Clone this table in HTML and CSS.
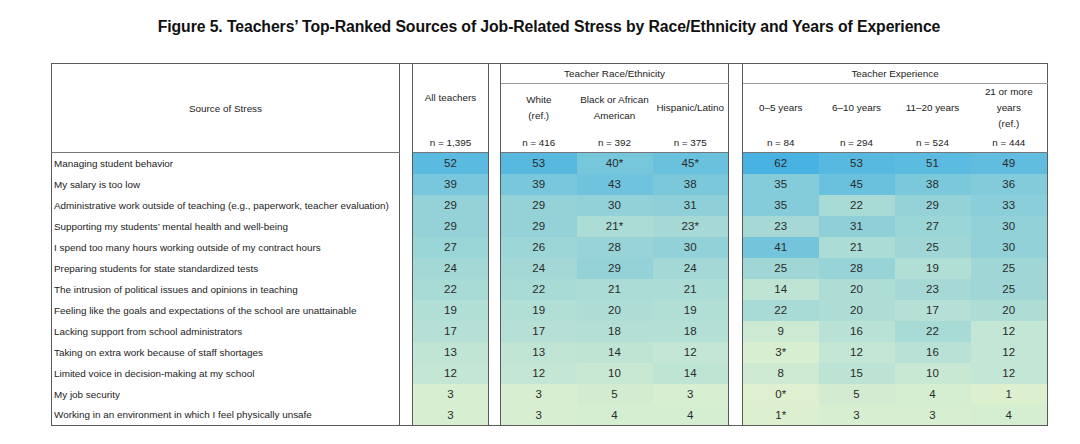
FILE: index.html
```html
<!DOCTYPE html>
<html lang="en">
<head>
<meta charset="utf-8">
<title>Figure 5</title>
<link rel="stylesheet" href="styles.css">
</head>
<body>
<div class="figure">
  <h1 class="title">Figure 5. Teachers’ Top-Ranked Sources of Job-Related Stress by Race/Ethnicity and Years of Experience</h1>
  <table class="grid">
    <colgroup>
      <col class="c-src"><col class="c-gap1"><col class="c-num"><col class="c-gap2">
      <col class="c-num"><col class="c-num"><col class="c-num"><col class="c-gap3">
      <col class="c-num"><col class="c-num"><col class="c-num"><col class="c-num4">
    </colgroup>
    <thead>
      <tr class="h1">
        <th rowspan="3" class="src-head">Source of Stress</th>
        <th rowspan="3" class="gap"></th>
        <th rowspan="2" class="hcell">All teachers</th>
        <th rowspan="3" class="gap"></th>
        <th colspan="3" class="group">Teacher Race/Ethnicity</th>
        <th rowspan="3" class="gap"></th>
        <th colspan="4" class="group">Teacher Experience</th>
      </tr>
      <tr class="h2">
        <th class="hcell">White<br>(ref.)</th>
        <th class="hcell">Black or African<br>American</th>
        <th class="hcell">Hispanic/Latino</th>
        <th class="hcell">0–5 years</th>
        <th class="hcell">6–10 years</th>
        <th class="hcell">11–20 years</th>
        <th class="hcell">21 or more<br>years<br>(ref.)</th>
      </tr>
      <tr class="h3">
        <th class="ncell">n = 1,395</th>
        <th class="ncell">n = 416</th>
        <th class="ncell">n = 392</th>
        <th class="ncell">n = 375</th>
        <th class="ncell">n = 84</th>
        <th class="ncell">n = 294</th>
        <th class="ncell">n = 524</th>
        <th class="ncell">n = 444</th>
      </tr>
    </thead>
    <tbody>
      <tr><td class="label">Managing student behavior</td><td class="gap"></td><td class="v">52</td><td class="gap"></td><td class="v">53</td><td class="v">40*</td><td class="v">45*</td><td class="gap"></td><td class="v">62</td><td class="v">53</td><td class="v">51</td><td class="v">49</td></tr>
      <tr><td class="label">My salary is too low</td><td class="gap"></td><td class="v">39</td><td class="gap"></td><td class="v">39</td><td class="v">43</td><td class="v">38</td><td class="gap"></td><td class="v">35</td><td class="v">45</td><td class="v">38</td><td class="v">36</td></tr>
      <tr><td class="label">Administrative work outside of teaching (e.g., paperwork, teacher evaluation)</td><td class="gap"></td><td class="v">29</td><td class="gap"></td><td class="v">29</td><td class="v">30</td><td class="v">31</td><td class="gap"></td><td class="v">35</td><td class="v">22</td><td class="v">29</td><td class="v">33</td></tr>
      <tr><td class="label">Supporting my students’ mental health and well-being</td><td class="gap"></td><td class="v">29</td><td class="gap"></td><td class="v">29</td><td class="v">21*</td><td class="v">23*</td><td class="gap"></td><td class="v">23</td><td class="v">31</td><td class="v">27</td><td class="v">30</td></tr>
      <tr><td class="label">I spend too many hours working outside of my contract hours</td><td class="gap"></td><td class="v">27</td><td class="gap"></td><td class="v">26</td><td class="v">28</td><td class="v">30</td><td class="gap"></td><td class="v">41</td><td class="v">21</td><td class="v">25</td><td class="v">30</td></tr>
      <tr><td class="label">Preparing students for state standardized tests</td><td class="gap"></td><td class="v">24</td><td class="gap"></td><td class="v">24</td><td class="v">29</td><td class="v">24</td><td class="gap"></td><td class="v">25</td><td class="v">28</td><td class="v">19</td><td class="v">25</td></tr>
      <tr><td class="label">The intrusion of political issues and opinions in teaching</td><td class="gap"></td><td class="v">22</td><td class="gap"></td><td class="v">22</td><td class="v">21</td><td class="v">21</td><td class="gap"></td><td class="v">14</td><td class="v">20</td><td class="v">23</td><td class="v">25</td></tr>
      <tr><td class="label">Feeling like the goals and expectations of the school are unattainable</td><td class="gap"></td><td class="v">19</td><td class="gap"></td><td class="v">19</td><td class="v">20</td><td class="v">19</td><td class="gap"></td><td class="v">22</td><td class="v">20</td><td class="v">17</td><td class="v">20</td></tr>
      <tr><td class="label">Lacking support from school administrators</td><td class="gap"></td><td class="v">17</td><td class="gap"></td><td class="v">17</td><td class="v">18</td><td class="v">18</td><td class="gap"></td><td class="v">9</td><td class="v">16</td><td class="v">22</td><td class="v">12</td></tr>
      <tr><td class="label">Taking on extra work because of staff shortages</td><td class="gap"></td><td class="v">13</td><td class="gap"></td><td class="v">13</td><td class="v">14</td><td class="v">12</td><td class="gap"></td><td class="v">3*</td><td class="v">12</td><td class="v">16</td><td class="v">12</td></tr>
      <tr><td class="label">Limited voice in decision-making at my school</td><td class="gap"></td><td class="v">12</td><td class="gap"></td><td class="v">12</td><td class="v">10</td><td class="v">14</td><td class="gap"></td><td class="v">8</td><td class="v">15</td><td class="v">10</td><td class="v">12</td></tr>
      <tr><td class="label">My job security</td><td class="gap"></td><td class="v">3</td><td class="gap"></td><td class="v">3</td><td class="v">5</td><td class="v">3</td><td class="gap"></td><td class="v">0*</td><td class="v">5</td><td class="v">4</td><td class="v">1</td></tr>
      <tr><td class="label">Working in an environment in which I feel physically unsafe</td><td class="gap"></td><td class="v">3</td><td class="gap"></td><td class="v">3</td><td class="v">4</td><td class="v">4</td><td class="gap"></td><td class="v">1*</td><td class="v">3</td><td class="v">3</td><td class="v">4</td></tr>
    </tbody>
  </table>
</div>
<script src="script.js"></script>
</body>
</html>
```

FILE: styles.css
```css
html, body {
  margin: 0;
  padding: 0;
  background: #ffffff;
}

.figure {
  width: 996px;
  margin-left: 51px;
  padding-top: 17px;
}

.title {
  margin: 0 0 26px 0;
  font-family: "Liberation Sans", Arial, sans-serif;
  font-weight: bold;
  font-size: 15.8px;
  line-height: 20px;
  text-align: center;
  color: #111;
  letter-spacing: -0.1px;
}

.grid {
  width: 997px;
  table-layout: fixed;
  border-collapse: collapse;
  border: 1px solid #5a5a5a;
  font-family: "Liberation Sans", Arial, sans-serif;
  color: #222;
}

.c-src { width: 348px; }
.c-gap1 { width: 13px; }
.c-gap2 { width: 12px; }
.c-gap3 { width: 14px; }
.c-num { width: 76px; }
.c-num4 { width: 77px; }

.grid th {
  font-weight: normal;
  font-size: 9.9px;
  padding: 0;
  text-align: center;
  vertical-align: middle;
}

.h1 { height: 20px; }
.h2 { height: 49px; }
.h3 { height: 20px; }

.hcell {
  line-height: 16px;
  white-space: nowrap;
}

.src-head {
  border-bottom: 1px solid #777;
}

.group {
  border-bottom: 1px solid #999;
  line-height: 19px;
}

.ncell {
  border-bottom: 1px solid #777;
}

.gap {
  border-left: 1px solid #5a5a5a;
  border-right: 1px solid #5a5a5a;
  background: #fff;
  padding: 0;
}

.grid tbody tr {
  height: 21px;
}

.label {
  font-size: 9.9px;
  padding: 0 0 0 2px;
  white-space: nowrap;
  overflow: hidden;
  color: #222;
}

.v {
  font-size: 11.5px;
  text-align: center;
  padding: 0;
  color: #2a2a2a;
}
```

FILE: script.js
```js
(function () {
  var stops = [
    [0, [222, 240, 207]],
    [12, [196, 230, 212]],
    [25, [160, 215, 214]],
    [40, [118, 198, 220]],
    [52, [90, 186, 224]],
    [62, [72, 178, 226]]
  ];
  function color(v) {
    for (var i = 0; i < stops.length - 1; i++) {
      var a = stops[i], b = stops[i + 1];
      if (v <= b[0]) {
        var t = (v - a[0]) / (b[0] - a[0]);
        var c = a[1].map(function (x, k) { return Math.round(x + (b[1][k] - x) * t); });
        return "rgb(" + c.join(",") + ")";
      }
    }
    return "rgb(" + stops[stops.length - 1][1].join(",") + ")";
  }
  var cells = document.querySelectorAll("td.v");
  for (var i = 0; i < cells.length; i++) {
    var v = parseInt(cells[i].textContent, 10);
    cells[i].style.backgroundColor = color(v);
  }
})();
```
